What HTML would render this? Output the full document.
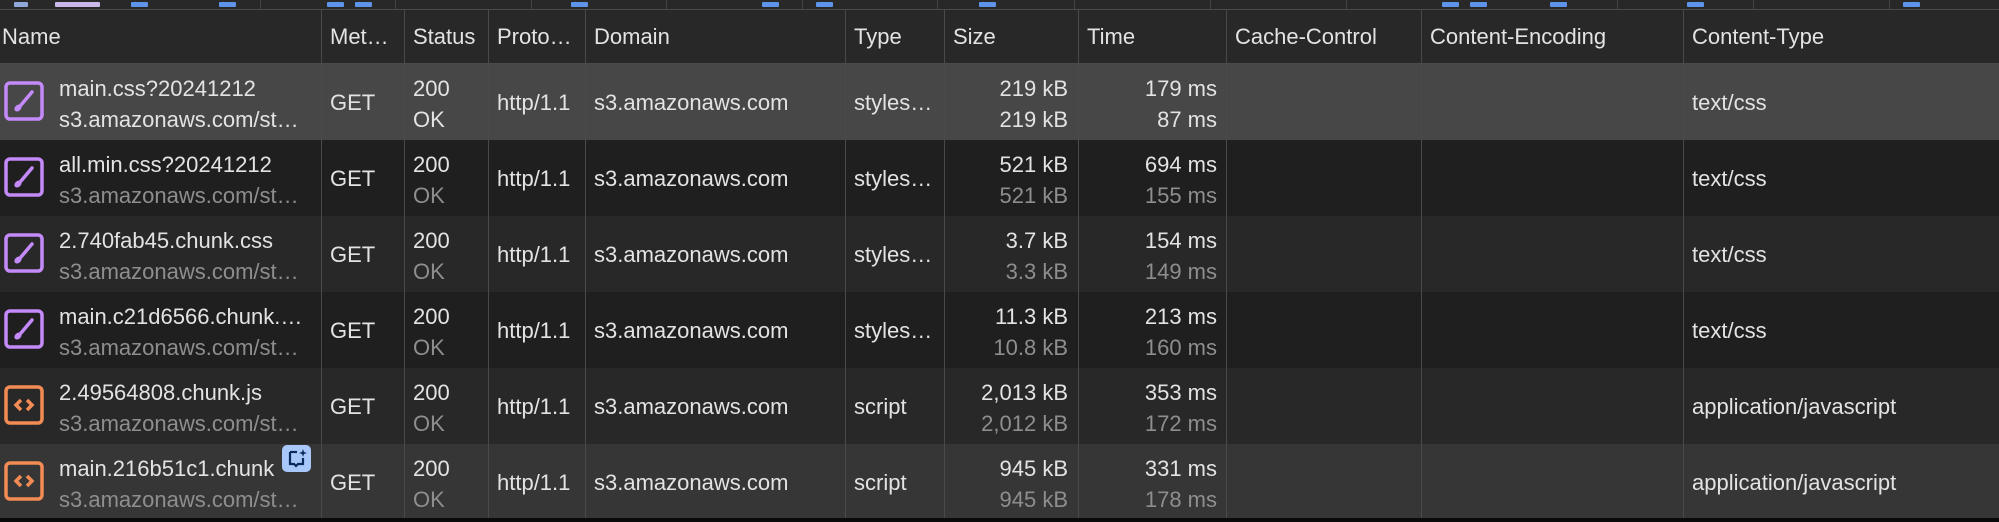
<!DOCTYPE html><html><head><style>
body{margin:0;width:1999px;height:522px;background:#1f1f1f;overflow:hidden;font-family:"Liberation Sans",sans-serif;font-size:22px;color:#e3e3e3;position:relative}
.strip{position:absolute;left:0;top:0;width:1999px;height:9px;background:#282828;border-bottom:1px solid #4a4a4a}
.strip i{position:absolute;top:2px;height:5px;background:#5d93e8;border-radius:1px}
.strip b{position:absolute;top:0;height:9px;width:1px;background:#444}
.hdr{position:absolute;left:0;top:10px;width:1999px;height:54px;background:#282828;border-bottom:1px solid #4a4a4a;box-sizing:border-box}
.row{position:absolute;left:0;width:1999px;height:76px}
.t{position:absolute;white-space:nowrap;line-height:25px}
.vl{position:absolute;width:1px;background:#4a4a4a}
.g{color:#8e8e8e}
.ico{position:absolute;left:4px;top:17px;width:40px;height:40px}
.a{top:12px}.b{top:43px}.m{top:26px}
</style></head><body>
<div class="strip">
<i style="left:14px;width:14px;background:#8fa8d8"></i><i style="left:55px;width:45px;background:#c9b8e8"></i><i style="left:131px;width:17px"></i><i style="left:219px;width:17px"></i><i style="left:327px;width:17px"></i><i style="left:355px;width:17px"></i><i style="left:571px;width:17px"></i><i style="left:762px;width:17px"></i><i style="left:816px;width:17px"></i><i style="left:979px;width:17px"></i><i style="left:1442px;width:17px"></i><i style="left:1470px;width:17px"></i><i style="left:1550px;width:17px"></i><i style="left:1687px;width:17px"></i><i style="left:1903px;width:17px"></i>
<b style="left:260px"></b><b style="left:395px"></b><b style="left:531px"></b><b style="left:666px"></b><b style="left:802px"></b><b style="left:937px"></b><b style="left:1074px"></b><b style="left:1210px"></b><b style="left:1346px"></b><b style="left:1617px"></b><b style="left:1753px"></b><b style="left:1889px"></b>
</div>
<div class="hdr">
<span class="t" style="left:2px;top:14px">Name</span>
<span class="t" style="left:330px;top:14px">Met…</span>
<span class="t" style="left:413px;top:14px">Status</span>
<span class="t" style="left:497px;top:14px">Proto…</span>
<span class="t" style="left:594px;top:14px">Domain</span>
<span class="t" style="left:854px;top:14px">Type</span>
<span class="t" style="left:953px;top:14px">Size</span>
<span class="t" style="left:1087px;top:14px">Time</span>
<span class="t" style="left:1235px;top:14px">Cache-Control</span>
<span class="t" style="left:1430px;top:14px">Content-Encoding</span>
<span class="t" style="left:1692px;top:14px">Content-Type</span>
</div>

<div class="row" style="top:64px;background:#474747">
<svg class="ico" viewBox="0 0 40 40"><rect x="2" y="2" width="36" height="36" rx="4" fill="none" stroke="#c58af9" stroke-width="3.5"/><path d="M28 11 L17 24" stroke="#c58af9" stroke-width="3.5" stroke-linecap="round"/><ellipse cx="14" cy="27" rx="4" ry="3" transform="rotate(-40 14 27)" fill="#c58af9"/></svg>
<span class="t a" style="left:59px">main.css?20241212</span><span class="t b" style="left:59px">s3.amazonaws.com/st…</span>
<span class="t m" style="left:330px">GET</span>
<span class="t a" style="left:413px">200</span><span class="t b" style="left:413px">OK</span>
<span class="t m" style="left:497px">http/1.1</span><span class="t m" style="left:594px">s3.amazonaws.com</span>
<span class="t m" style="left:854px">styles…</span>
<span class="t a" style="right:931px">219 kB</span><span class="t b" style="right:931px">219 kB</span>
<span class="t a" style="right:782px">179 ms</span><span class="t b" style="right:782px">87 ms</span>
<span class="t m" style="left:1692px">text/css</span>
</div>

<div class="row" style="top:140px;background:#1f1f1f">
<svg class="ico" viewBox="0 0 40 40"><rect x="2" y="2" width="36" height="36" rx="4" fill="none" stroke="#c58af9" stroke-width="3.5"/><path d="M28 11 L17 24" stroke="#c58af9" stroke-width="3.5" stroke-linecap="round"/><ellipse cx="14" cy="27" rx="4" ry="3" transform="rotate(-40 14 27)" fill="#c58af9"/></svg>
<span class="t a" style="left:59px">all.min.css?20241212</span><span class="t b g" style="left:59px">s3.amazonaws.com/st…</span>
<span class="t m" style="left:330px">GET</span>
<span class="t a" style="left:413px">200</span><span class="t b g" style="left:413px">OK</span>
<span class="t m" style="left:497px">http/1.1</span><span class="t m" style="left:594px">s3.amazonaws.com</span>
<span class="t m" style="left:854px">styles…</span>
<span class="t a" style="right:931px">521 kB</span><span class="t b g" style="right:931px">521 kB</span>
<span class="t a" style="right:782px">694 ms</span><span class="t b g" style="right:782px">155 ms</span>
<span class="t m" style="left:1692px">text/css</span>
</div>

<div class="row" style="top:216px;background:#282828">
<svg class="ico" viewBox="0 0 40 40"><rect x="2" y="2" width="36" height="36" rx="4" fill="none" stroke="#c58af9" stroke-width="3.5"/><path d="M28 11 L17 24" stroke="#c58af9" stroke-width="3.5" stroke-linecap="round"/><ellipse cx="14" cy="27" rx="4" ry="3" transform="rotate(-40 14 27)" fill="#c58af9"/></svg>
<span class="t a" style="left:59px">2.740fab45.chunk.css</span><span class="t b g" style="left:59px">s3.amazonaws.com/st…</span>
<span class="t m" style="left:330px">GET</span>
<span class="t a" style="left:413px">200</span><span class="t b g" style="left:413px">OK</span>
<span class="t m" style="left:497px">http/1.1</span><span class="t m" style="left:594px">s3.amazonaws.com</span>
<span class="t m" style="left:854px">styles…</span>
<span class="t a" style="right:931px">3.7 kB</span><span class="t b g" style="right:931px">3.3 kB</span>
<span class="t a" style="right:782px">154 ms</span><span class="t b g" style="right:782px">149 ms</span>
<span class="t m" style="left:1692px">text/css</span>
</div>

<div class="row" style="top:292px;background:#1f1f1f">
<svg class="ico" viewBox="0 0 40 40"><rect x="2" y="2" width="36" height="36" rx="4" fill="none" stroke="#c58af9" stroke-width="3.5"/><path d="M28 11 L17 24" stroke="#c58af9" stroke-width="3.5" stroke-linecap="round"/><ellipse cx="14" cy="27" rx="4" ry="3" transform="rotate(-40 14 27)" fill="#c58af9"/></svg>
<span class="t a" style="left:59px">main.c21d6566.chunk.…</span><span class="t b g" style="left:59px">s3.amazonaws.com/st…</span>
<span class="t m" style="left:330px">GET</span>
<span class="t a" style="left:413px">200</span><span class="t b g" style="left:413px">OK</span>
<span class="t m" style="left:497px">http/1.1</span><span class="t m" style="left:594px">s3.amazonaws.com</span>
<span class="t m" style="left:854px">styles…</span>
<span class="t a" style="right:931px">11.3 kB</span><span class="t b g" style="right:931px">10.8 kB</span>
<span class="t a" style="right:782px">213 ms</span><span class="t b g" style="right:782px">160 ms</span>
<span class="t m" style="left:1692px">text/css</span>
</div>

<div class="row" style="top:368px;background:#282828">
<svg class="ico" viewBox="0 0 40 40"><rect x="2" y="2" width="36" height="36" rx="4" fill="none" stroke="#f28b54" stroke-width="3.5"/><path d="M17 15 L12 20 L17 25 M23 15 L28 20 L23 25" fill="none" stroke="#f28b54" stroke-width="3.5"/></svg>
<span class="t a" style="left:59px">2.49564808.chunk.js</span><span class="t b g" style="left:59px">s3.amazonaws.com/st…</span>
<span class="t m" style="left:330px">GET</span>
<span class="t a" style="left:413px">200</span><span class="t b g" style="left:413px">OK</span>
<span class="t m" style="left:497px">http/1.1</span><span class="t m" style="left:594px">s3.amazonaws.com</span>
<span class="t m" style="left:854px">script</span>
<span class="t a" style="right:931px">2,013 kB</span><span class="t b g" style="right:931px">2,012 kB</span>
<span class="t a" style="right:782px">353 ms</span><span class="t b g" style="right:782px">172 ms</span>
<span class="t m" style="left:1692px">application/javascript</span>
</div>

<div class="row" style="top:444px;background:#363636;height:74px">
<svg class="ico" viewBox="0 0 40 40"><rect x="2" y="2" width="36" height="36" rx="4" fill="none" stroke="#f28b54" stroke-width="3.5"/><path d="M17 15 L12 20 L17 25 M23 15 L28 20 L23 25" fill="none" stroke="#f28b54" stroke-width="3.5"/></svg>
<span class="t a" style="left:59px">main.216b51c1.chunk</span><span class="t b g" style="left:59px">s3.amazonaws.com/st…</span>
<svg style="position:absolute;left:282px;top:1px" width="29" height="27" viewBox="0 0 29 27"><rect width="29" height="27" rx="5" fill="#a8c7fa"/><path d="M8 7 V19 H12 L14 21 L16 19 H21 V13" fill="none" stroke="#0b2a5c" stroke-width="2.2"/><path d="M8 7 H15" stroke="#0b2a5c" stroke-width="2.2"/><path d="M21 4 L22 7 L25 8 L22 9 L21 12 L20 9 L17 8 L20 7Z" fill="#0b2a5c"/></svg>
<span class="t m" style="left:330px">GET</span>
<span class="t a" style="left:413px">200</span><span class="t b g" style="left:413px">OK</span>
<span class="t m" style="left:497px">http/1.1</span><span class="t m" style="left:594px">s3.amazonaws.com</span>
<span class="t m" style="left:854px">script</span>
<span class="t a" style="right:931px">945 kB</span><span class="t b g" style="right:931px">945 kB</span>
<span class="t a" style="right:782px">331 ms</span><span class="t b g" style="right:782px">178 ms</span>
<span class="t m" style="left:1692px">application/javascript</span>
</div>
<div style="position:absolute;left:0;top:518px;width:1999px;height:4px;background:#0a0a0a"></div>

<div style="position:absolute;left:0;top:10px;height:508px;width:1999px">
<div class="vl" style="left:321px;top:0;bottom:0"></div><div class="vl" style="left:404px;top:0;bottom:0"></div><div class="vl" style="left:488px;top:0;bottom:0"></div><div class="vl" style="left:585px;top:0;bottom:0"></div><div class="vl" style="left:845px;top:0;bottom:0"></div><div class="vl" style="left:944px;top:0;bottom:0"></div><div class="vl" style="left:1078px;top:0;bottom:0"></div><div class="vl" style="left:1226px;top:0;bottom:0"></div><div class="vl" style="left:1421px;top:0;bottom:0"></div><div class="vl" style="left:1683px;top:0;bottom:0"></div>
</div>
</body></html>
